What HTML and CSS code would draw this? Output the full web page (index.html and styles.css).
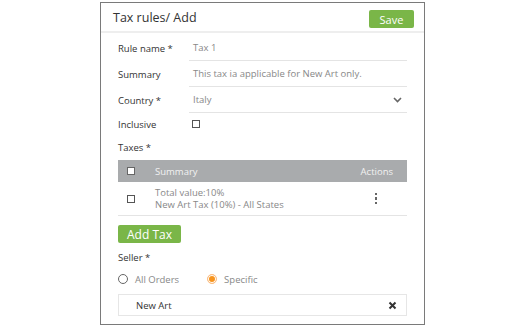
FILE: index.html
```html
<!DOCTYPE html>
<html lang="en">
<head>
    <meta charset="utf-8">
    <link rel="stylesheet" href="styles.css">
</head>
<body>
    <div class="panel">
        <header class="panel-head">
            <h1>Tax rules/ Add</h1>
            <button class="btn save">Save</button>
        </header>

        <div class="form">
            <div class="field">
                <label>Rule name *</label>
                <div class="input">Tax 1</div>
            </div>
            <div class="field">
                <label>Summary</label>
                <div class="input">This tax ia applicable for New Art only.</div>
            </div>
            <div class="field">
                <label>Country *</label>
                <div class="input select">
                    <span>Italy</span>
                    <svg width="9" height="6" viewBox="0 0 9 6"><path d="M1 1 L4.5 4.5 L8 1" fill="none" stroke="#666" stroke-width="1.6"/></svg>
                </div>
            </div>
            <div class="field check-row">
                <label>Inclusive</label>
                <span class="box"></span>
            </div>

            <p class="section-label">Taxes *</p>
            <div class="table">
                <div class="t-head">
                    <span class="box white"></span>
                    <span class="t-sum">Summary</span>
                    <span class="t-act">Actions</span>
                </div>
                <div class="t-row">
                    <span class="box"></span>
                    <div class="t-sum">
                        <p>Total value:10%</p>
                        <p>New Art Tax (10%) - All States</p>
                    </div>
                    <span class="kebab"><i></i><i></i><i></i></span>
                </div>
            </div>

            <button class="btn add">Add Tax</button>

            <p class="section-label seller">Seller *</p>
            <div class="radios">
                <span class="radio"></span><span class="r-text">All Orders</span>
                <span class="radio on"></span><span class="r-text">Specific</span>
            </div>
            <div class="chip">
                <span>New Art</span>
                <svg width="9" height="9" viewBox="0 0 9 9"><path d="M1.5 1.5 L7.5 7.5 M7.5 1.5 L1.5 7.5" stroke="#333" stroke-width="2"/></svg>
            </div>
        </div>
    </div>
</body>
</html>
```

FILE: styles.css
```css
body {
    margin: 0;
    background: #fff;
    font-family: "Open Sans", sans-serif;
    color: #333;
}

p {
    margin: 0;
}

.panel {
    width: 323px;
    height: 321px;
    margin: 2px auto 0;
    border: 1px solid #7a7a7a;
    box-sizing: content-box;
}

.panel-head {
    height: 28px;
    display: flex;
    justify-content: space-between;
    align-items: flex-start;
    padding: 0 10px 0 12px;
    border-bottom: 2px solid #eeeeee;
}

.panel-head h1 {
    margin: 0;
    font-size: 12.5px;
    line-height: 30px;
    font-weight: 400;
    color: #333;
}

.btn {
    border: none;
    border-radius: 2px;
    background: #7ab648;
    color: #fff;
    font-family: "Open Sans", sans-serif;
    padding: 0;
}

.save {
    width: 45px;
    height: 18px;
    font-size: 11px;
    margin-top: 7px;
}

.form {
    padding: 2px 17px 0;
}

.field {
    display: grid;
    grid-template-columns: 71px 1fr;
    align-items: center;
    font-size: 9.5px;
}

.field label {
    color: #333;
}

.input {
    height: 25px;
    line-height: 25px;
    padding-left: 4px;
    border-bottom: 1px solid #e4e4e4;
    color: #888;
}

.select {
    display: flex;
    justify-content: space-between;
    align-items: center;
    padding-right: 5px;
}

.check-row {
    height: 22px;
}

.check-row .box {
    margin-left: 3px;
}

.box {
    display: inline-block;
    width: 6px;
    height: 6px;
    border: 1.5px solid #555;
    background: #fff;
}

.box.white {
    border-color: #666;
}

.section-label {
    font-size: 9.5px;
    height: 20px;
    line-height: 20px;
    margin-top: 3px;
}

.table {
    margin-top: 2px;
    font-size: 9.5px;
}

.t-head {
    height: 22px;
    background: #a9abad;
    color: #f2f2f2;
    display: flex;
    align-items: center;
    padding: 0 14px 0 9px;
}

.t-head .t-sum,
.t-row .t-sum {
    flex: 1;
    margin-left: 20px;
}

.t-row {
    height: 33px;
    border-bottom: 1px solid #e4e4e4;
    display: flex;
    align-items: center;
    padding: 0 30px 0 9px;
    color: #888;
}

.t-row p {
    line-height: 12px;
}

.kebab {
    display: flex;
    flex-direction: column;
    gap: 2px;
}

.kebab i {
    width: 2.5px;
    height: 2.5px;
    background: #666;
}

.add {
    display: block;
    margin-top: 9px;
    width: 63px;
    height: 18px;
    font-size: 12px;
}

.seller {
    margin-top: 7px;
    height: 16px;
    line-height: 16px;
}

.radios {
    height: 18px;
    display: flex;
    align-items: center;
    font-size: 9.5px;
    color: #888;
    margin-top: 4px;
}

.radio {
    width: 8px;
    height: 8px;
    border: 1px solid #666;
    border-radius: 50%;
}

.radio.on {
    border-color: #fbc08a;
    background: #f7941d;
    box-shadow: inset 0 0 0 1px #fff;
    margin-left: 28px;
}

.r-text {
    margin-left: 7px;
}

.chip {
    margin-top: 6px;
    height: 20px;
    border: 1px solid #e6e6e6;
    display: flex;
    justify-content: space-between;
    align-items: center;
    padding: 0 9px 0 17px;
    font-size: 9.5px;
    color: #333;
}
```
